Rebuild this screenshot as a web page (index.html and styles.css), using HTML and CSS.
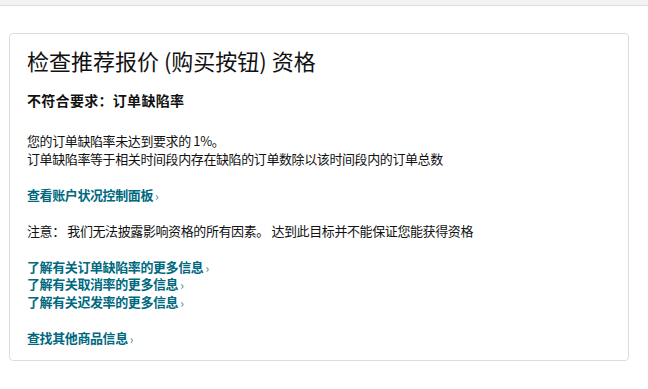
FILE: index.html
```html
<!DOCTYPE html>
<html lang="zh-CN">
<head>
    <meta charset="UTF-8">
    <meta name="viewport" content="width=device-width, initial-scale=1.0">
    <title>检查推荐报价资格</title>
    <link rel="stylesheet" href="styles.css">
</head>
<body>
<div class="topbar"></div>

<div class="card">
    <h1>检查推荐报价 (购买按钮) 资格</h1>
    <h3>不符合要求：订单缺陷率</h3>

    <p>
        您的订单缺陷率未达到要求的 1%。<br>
        订单缺陷率等于相关时间段内存在缺陷的订单数除以该时间段内的订单总数
    </p>

    <p><a href="#">查看账户状况控制面板</a><span class="arrow">›</span></p>

    <p>注意： 我们无法披露影响资格的所有因素。 达到此目标并不能保证您能获得资格</p>

    <p>
        <a href="#">了解有关订单缺陷率的更多信息</a><span class="arrow">›</span><br>
        <a href="#">了解有关取消率的更多信息</a><span class="arrow">›</span><br>
        <a href="#">了解有关迟发率的更多信息</a><span class="arrow">›</span>
    </p>

    <p class="last"><a href="#">查找其他商品信息</a><span class="arrow">›</span></p>
</div>
</body>
</html>
```

FILE: styles.css
```css
body {
    margin: 0;
    padding: 0;
    font-family: "Noto Sans CJK SC", "Liberation Sans", sans-serif;
    font-size: 13px;
    color: #111;
    background: #fff;
}

.topbar {
    height: 5px;
    background: #f3f3f3;
    border-bottom: 1px solid #dddddd;
}

.card {
    margin: 27px 0 0 9px;
    width: 584px;
    padding: 11px 17px 13px 17px;
    border: 1px solid #dddddd;
    border-radius: 4px;
}

.card h1 {
    margin: 0 0 15px;
    font-size: 22px;
    font-weight: normal;
    line-height: 30px;
}

.card h3 {
    margin: 0 0 22px;
    font-size: 14px;
    font-weight: bold;
    line-height: 20px;
    letter-spacing: 0.3px;
}

.card p {
    margin: 0 0 18.5px;
    line-height: 17.6px;
    letter-spacing: -0.4px;
}

.card p.last {
    margin-bottom: 0;
}

.card a {
    color: #00697f;
    font-weight: bold;
    text-decoration: none;
}

.arrow {
    color: #3f7f8f;
    font-size: 12px;
    margin-left: 2px;
    position: relative;
    top: 1px;
}
```
